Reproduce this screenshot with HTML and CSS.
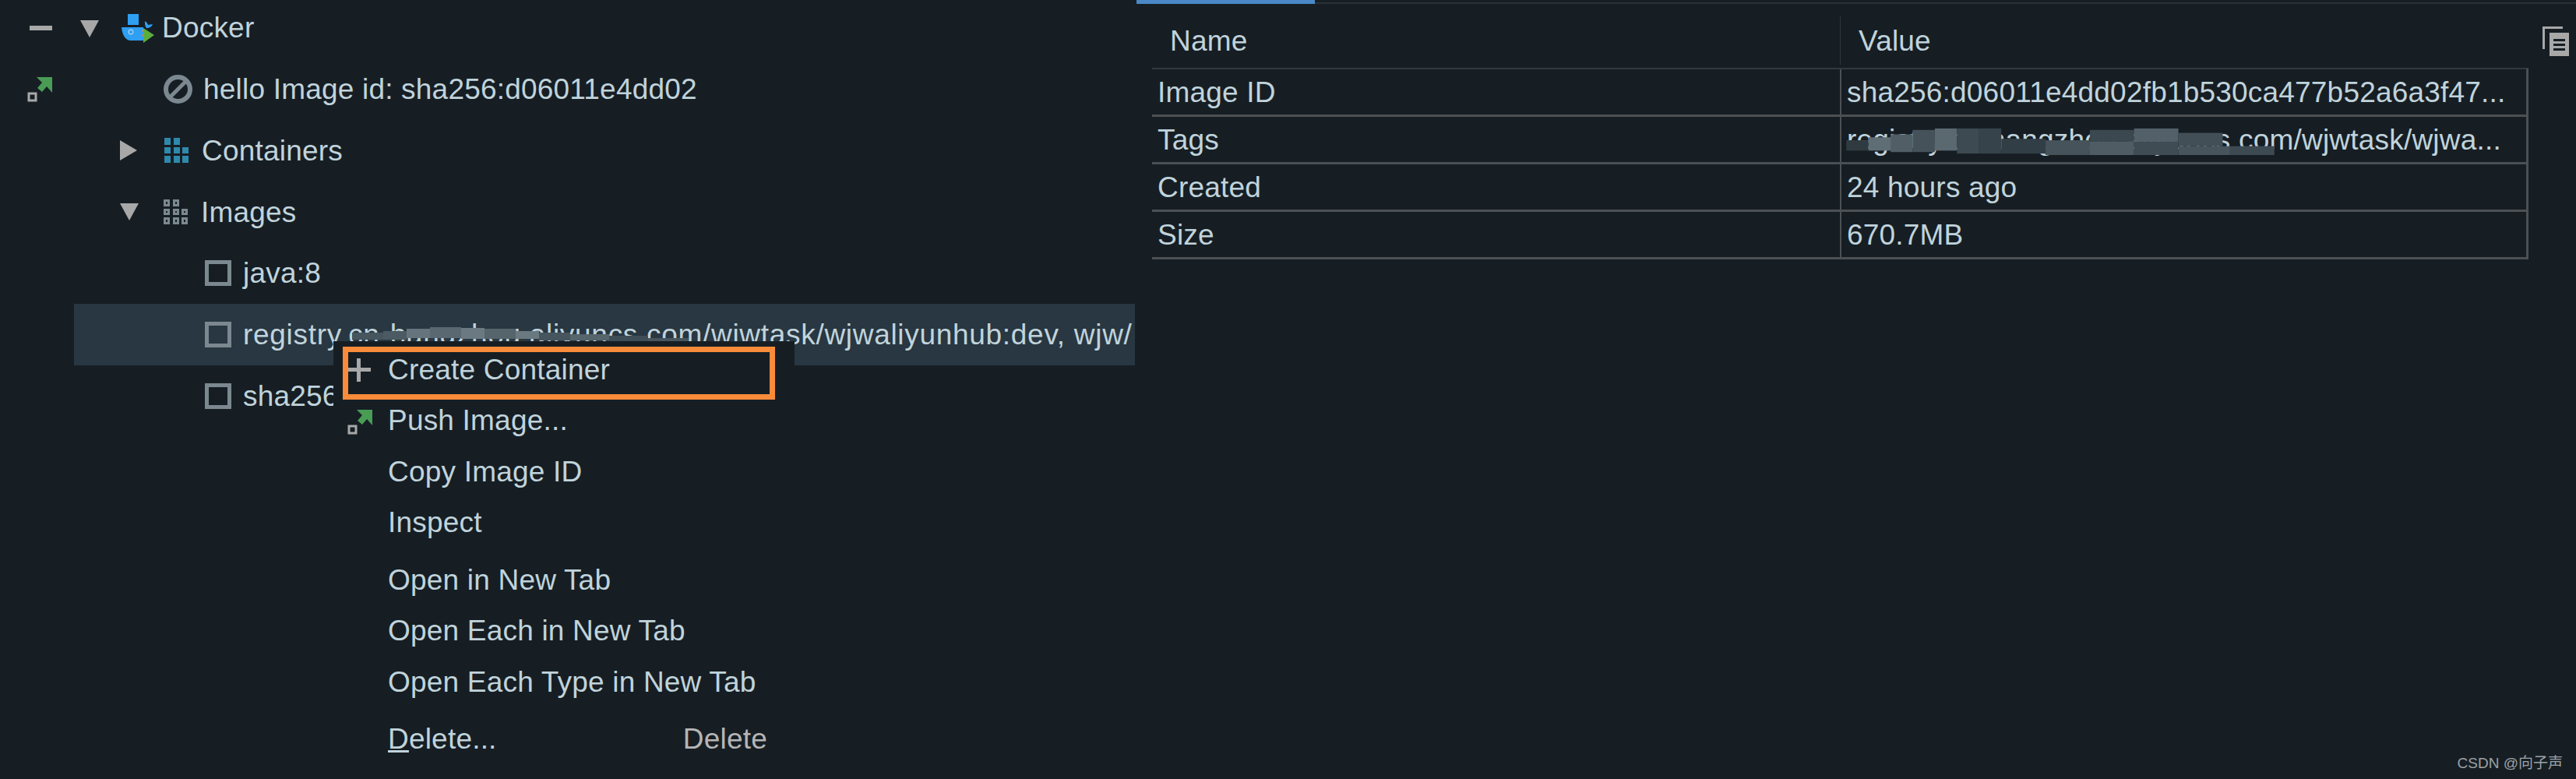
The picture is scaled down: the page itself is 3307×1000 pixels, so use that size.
FILE: index.html
```html
<!DOCTYPE html>
<html lang="en">
<head>
  <meta charset="UTF-8">
  <title>Docker Services</title>
  <link rel="stylesheet" href="styles.css">
</head>
<body>
  <div class="workspace">
    <div class="gutter">
      <svg class="gutter-icon collapse" width="30" height="8" viewBox="0 0 30 8"><rect y="1" width="29" height="6" fill="#a8a8a8"/></svg>
      <svg class="gutter-icon push" width="33" height="32" viewBox="0 0 33 32">
        <polygon points="12,0 32,0 32,20 25,12 19,19 13,14 19,7" fill="#499c54"/>
        <rect x="2" y="21" width="9" height="9" fill="none" stroke="#a8a8a8" stroke-width="3"/>
      </svg>
    </div>

    <div class="tree">
      <div class="row row-root">
        <span class="arrow arrow-down arrow-root"></span>
        <svg class="docker-icon" width="43" height="38" viewBox="0 0 43 38">
          <rect x="8" y="0" width="14" height="14" fill="#2f9ff2"/>
          <path d="M0 17 H28 V34 H12 C5 34 1 27 0 17 Z" fill="#2f9ff2"/>
          <path d="M30 9 C33 11 34 13 34 14 L40 13 C39 16 36 18 32 18 C30 16 30 12 30 9 Z" fill="#2f9ff2"/>
          <circle cx="12" cy="23" r="3" fill="none" stroke="#cfe6f7" stroke-width="1"/>
          <rect x="26" y="20" width="3" height="3" fill="#8f9498"/>
          <rect x="26" y="26" width="3" height="3" fill="#8f9498"/>
          <polygon points="28,18 42,27 28,37" fill="#5bae3d"/>
        </svg>
        <span class="label">Docker</span>
      </div>
      <div class="row row-service">
        <svg class="tree-icon" width="37" height="37" viewBox="0 0 37 37">
          <circle cx="18.500" cy="18.500" r="15.500" fill="none" stroke="#7b8890" stroke-width="6"/>
          <line x1="9" y1="28" x2="28" y2="9" stroke="#7b8890" stroke-width="5"/>
        </svg>
        <span class="label">hello Image id: sha256:d06011e4dd02</span>
      </div>
      <div class="row row-group">
        <span class="arrow arrow-right"></span>
        <svg class="tree-icon" width="31" height="32" viewBox="0 0 31 32">
          <g fill="#2f89ad">
            <rect x="0" y="0" width="8" height="9"/><rect x="12" y="0" width="8" height="9"/>
            <rect x="0" y="12" width="8" height="8"/><rect x="12" y="12" width="8" height="8"/><rect x="23" y="12" width="8" height="8"/>
            <rect x="0" y="23" width="8" height="9"/><rect x="12" y="23" width="8" height="9"/><rect x="23" y="23" width="8" height="9"/>
          </g>
        </svg>
        <span class="label">Containers</span>
      </div>
      <div class="row row-group">
        <span class="arrow arrow-down"></span>
        <svg class="tree-icon" width="31" height="32" viewBox="0 0 31 32">
          <g fill="none" stroke="#7b8890" stroke-width="3">
            <rect x="1.500" y="1.500" width="5" height="6"/><rect x="13.500" y="1.500" width="5" height="6"/>
            <rect x="1.500" y="13.500" width="5" height="5"/><rect x="13.500" y="13.500" width="5" height="5"/><rect x="24.500" y="13.500" width="5" height="5"/>
            <rect x="1.500" y="24.500" width="5" height="6"/><rect x="13.500" y="24.500" width="5" height="6"/><rect x="24.500" y="24.500" width="5" height="6"/>
          </g>
        </svg>
        <span class="label">Images</span>
      </div>
      <div class="row row-image">
        <span class="image-box"></span>
        <span class="label">java:8</span>
      </div>
      <div class="row row-image row-selected">
        <span class="image-box"></span>
        <span class="label">registry.cn-hangzhou.aliyuncs.com/wjwtask/wjwaliyunhub:dev, wjw/</span>
        <svg class="smear smear-tree" width="432" height="20" viewBox="0 0 432 20">
          <g fill="#5f6d75">
            <rect x="0" y="8" width="40" height="9" fill="#46555e"/><rect x="40" y="6" width="30" height="11" fill="#4c5a63"/>
            <rect x="70" y="3" width="30" height="12" fill="#66757d"/><rect x="100" y="1" width="40" height="14" fill="#5a6971"/>
            <rect x="140" y="2" width="30" height="14" fill="#6b7a82"/><rect x="170" y="3" width="40" height="13" fill="#56646c"/>
            <rect x="210" y="6" width="30" height="10" fill="#6a7880"/><rect x="240" y="8" width="40" height="10" fill="#46555e"/>
            <rect x="280" y="10" width="50" height="8" fill="#56646c"/><rect x="330" y="12" width="50" height="7" fill="#3e4d56"/>
            <rect x="380" y="15" width="52" height="4" fill="#46555e"/>
          </g>
        </svg>
      </div>
      <div class="row row-image">
        <span class="image-box"></span>
        <span class="label label-clipped">sha256:d06011e4dd02</span>
      </div>
    </div>

    <div class="details">
      <div class="tabbar"><span class="tab-active"></span></div>
      <div class="props-head">
        <span class="head-name">Name</span>
        <span class="head-value">Value</span>
        <svg class="copy-icon" width="34" height="38" viewBox="0 0 34 38">
          <path d="M0 0 H26 V3 H3 V29 H0 Z" fill="#a8a8a8"/>
          <rect x="9" y="8" width="25" height="30" fill="#a8a8a8"/>
          <g fill="#161e24"><rect x="14" y="16" width="15" height="3"/><rect x="14" y="22" width="15" height="3"/><rect x="14" y="28" width="15" height="3"/></g>
        </svg>
      </div>
      <div class="props">
        <div class="prop">
          <span class="prop-name">Image ID</span>
          <span class="prop-value">sha256:d06011e4dd02fb1b530ca477b52a6a3f47...</span>
        </div>
        <div class="prop">
          <span class="prop-name">Tags</span>
          <span class="prop-value">registry.cn-hangzhou.aliyuncs.com/wjwtask/wjwa...</span>
          <svg class="smear smear-tags" width="580" height="36" viewBox="0 0 580 38">
            <rect x="0" y="18" width="30" height="14" fill="#2f3a41"/><rect x="30" y="14" width="30" height="18" fill="#5f6d75"/>
            <rect x="60" y="10" width="30" height="24" fill="#515e66"/><rect x="90" y="4" width="30" height="30" fill="#465259"/>
            <rect x="120" y="2" width="30" height="30" fill="#5a686f"/><rect x="150" y="2" width="30" height="34" fill="#3d4a51"/>
            <rect x="180" y="2" width="30" height="34" fill="#36434a"/><rect x="210" y="16" width="60" height="20" fill="#323e45"/>
            <rect x="270" y="18" width="60" height="20" fill="#46535a"/><rect x="330" y="4" width="60" height="16" fill="#3b484f"/>
            <rect x="330" y="20" width="60" height="18" fill="#4f5c63"/><rect x="390" y="2" width="60" height="18" fill="#52606a"/>
            <rect x="390" y="20" width="60" height="18" fill="#3f4c53"/><rect x="450" y="8" width="60" height="18" fill="#434f56"/>
            <rect x="450" y="26" width="70" height="12" fill="#47545b"/><rect x="520" y="26" width="60" height="12" fill="#3d4a51"/>
          </svg>
        </div>
        <div class="prop">
          <span class="prop-name">Created</span>
          <span class="prop-value">24 hours ago</span>
        </div>
        <div class="prop">
          <span class="prop-name">Size</span>
          <span class="prop-value">670.7MB</span>
        </div>
      </div>
    </div>
  </div>

  <!-- context menu over the tree -->
  <div class="menu">
    <div class="menu-group">
      <div class="menu-item">
        <svg class="menu-icon" width="30" height="30" viewBox="0 0 30 30"><path d="M12 0 H17 V12 H30 V17 H17 V30 H12 V17 H0 V12 H12 Z" fill="#a8a8a8"/></svg>
        <span>Create Container</span>
      </div>
      <div class="menu-item">
        <svg class="menu-icon" width="33" height="32" viewBox="0 0 33 32">
          <polygon points="12,0 32,0 32,20 25,12 19,19 13,14 19,7" fill="#499c54"/>
          <rect x="2" y="21" width="9" height="9" fill="none" stroke="#a8a8a8" stroke-width="3"/>
        </svg>
        <span>Push Image...</span>
      </div>
      <div class="menu-item"><span>Copy Image ID</span></div>
      <div class="menu-item"><span>Inspect</span></div>
    </div>
    <div class="menu-group">
      <div class="menu-item"><span>Open in New Tab</span></div>
      <div class="menu-item"><span>Open Each in New Tab</span></div>
      <div class="menu-item"><span>Open Each Type in New Tab</span></div>
    </div>
    <div class="menu-group">
      <div class="menu-item menu-delete"><span><u>D</u>elete...</span><span class="shortcut">Delete</span></div>
    </div>
    <div class="highlight"></div>
  </div>

  <div class="watermark">CSDN @向子声</div>
</body>
</html>
```

FILE: styles.css
```css
html, body {
  height: 100%;
}
body {
  margin: 0;
  overflow: hidden;
  background: #161e24;
  color: #c0d3db;
  font-family: "Liberation Sans", Arial, sans-serif;
  font-size: 37px;
  letter-spacing: .2px;
  position: relative;
}
.workspace {
  display: flex;
  height: 1000px;
}

/* left strip */
.gutter {
  width: 95px;
  flex: none;
  display: flex;
  flex-direction: column;
  align-items: flex-start;
  padding: 32px 0 0 38px;
  box-sizing: border-box;
}
.gutter-icon.push {
  margin: 59px 0 0 -3px;
}

/* tree */
.tree {
  width: 1362px;
  flex: none;
}
.row {
  height: 78.75px;
  display: flex;
  align-items: center;
  position: relative;
  white-space: nowrap;
  overflow: hidden;
}
.row-root {
  height: 73px;
  padding-left: 8px;
  margin-bottom: 2px;
}
.row-service {
  padding-left: 115px;
}
.row-group {
  padding-left: 59px;
}
.row-image {
  padding-left: 168px;
}
.row-selected {
  background: #283741;
}
.row-selected .label {
  letter-spacing: .7px;
}
.label {
  line-height: 1.2;
  padding-top: 2px;
}
.row-root .label {
  padding-top: 0;
}
.label-clipped {
  width: 116px;
  overflow: hidden;
}
.arrow {
  flex: none;
  width: 0;
  height: 0;
}
.arrow-down {
  border-left: 12.500px solid transparent;
  border-right: 12.500px solid transparent;
  border-top: 22px solid #a8a8a8;
  margin-right: 32px;
}
.arrow-right {
  border-top: 13px solid transparent;
  border-bottom: 13px solid transparent;
  border-left: 22px solid #a8a8a8;
  margin-right: 35px;
}
.arrow-root {
  margin-right: 29px;
}
.docker-icon {
  flex: none;
  margin-right: 9px;
}
.tree-icon {
  flex: none;
  margin-right: 17px;
}
.row-service .tree-icon {
  margin-right: 14px;
}
.image-box {
  flex: none;
  width: 34px;
  height: 33px;
  box-sizing: border-box;
  border: 5px solid #7b8890;
  margin-right: 15px;
}
.smear {
  position: absolute;
}
.smear-tree {
  left: 357px;
  top: 29px;
}

/* right side */
.details {
  flex: 1;
  min-width: 0;
  margin-left: 2px;
}
.tabbar {
  height: 5px;
  display: flex;
  background: linear-gradient(#161e24 3px, #2a3136 3px);
}
.tab-active {
  width: 229px;
  background: #4a88c7;
}
.props-head {
  display: grid;
  grid-template-columns: 883px 885px 1fr;
  height: 62px;
  margin: 16px 0 0 20px;
  align-items: center;
}
.head-name {
  padding-top: 2px;
  padding-left: 23px;
}
.head-value {
  height: 100%;
  display: flex;
  align-items: center;
  padding-top: 2px;
  box-sizing: border-box;
  padding-left: 23px;
  border-left: 1px solid #2f373c;
}
.copy-icon {
  margin-left: 17px;
  margin-top: 2px;
}
.props {
  margin: 4px 0 0 20px;
  width: 1767px;
  border-top: 2px solid #33393c;
  border-right: 3px solid #4c5053;
  box-sizing: border-box;
}
.prop {
  display: grid;
  grid-template-columns: 883px 1fr;
  height: 61px;
  box-sizing: border-box;
  border-bottom: 3px solid #4c5053;
  position: relative;
  align-items: center;
  white-space: nowrap;
}
.prop-name {
  padding-left: 7px;
  padding-top: 2px;
}
.prop-value {
  height: 100%;
  display: flex;
  align-items: center;
  box-sizing: border-box;
  padding-left: 7px;
  padding-top: 2px;
  border-left: 2px solid #4c5053;
  overflow: hidden;
}
.smear-tags {
  left: 876px;
  top: 13px;
}

/* context menu */
.menu {
  position: absolute;
  left: 428px;
  top: 438px;
  width: 592px;
  height: 562px;
  box-sizing: border-box;
  padding-top: 3px;
  background: #161e24;
  display: flex;
  flex-direction: column;
  gap: 8px;
}
.menu-item {
  height: 65.500px;
  display: flex;
  align-items: center;
  padding-left: 70px;
  position: relative;
}
.menu-item span {
  padding-top: 2px;
}
.menu-icon {
  position: absolute;
  left: 18px;
  top: 19px;
}
.menu-delete {
  justify-content: space-between;
  padding-right: 35px;
}
.shortcut {
  color: #b5b5b5;
}
.highlight {
  position: absolute;
  left: 12px;
  top: 7px;
  width: 555px;
  height: 68px;
  box-sizing: border-box;
  border: 7px solid #f98b3a;
}

.watermark {
  position: absolute;
  right: 17px;
  bottom: 9px;
  font-family: "Liberation Sans", "Noto Sans CJK SC", sans-serif;
  font-size: 19px;
  letter-spacing: 0;
  color: #9da2a5;
}
```
